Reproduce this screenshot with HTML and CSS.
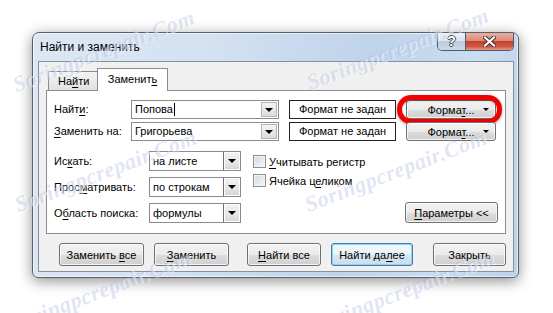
FILE: index.html
```html
<!DOCTYPE html>
<html lang="ru">
<head>
    <meta charset="UTF-8">
    <title>Найти и заменить</title>
    <link rel="stylesheet" href="styles.css">
</head>
<body>
    <div class="dialog">
        <div class="titlebar">
            <span class="title">Найти и заменить</span>
            <div class="caption">
                <span class="cap-help">?</span>
                <span class="cap-close">
                    <svg width="13" height="11" viewBox="0 0 13 11">
                        <path d="M2 1.5 L11 9.5 M11 1.5 L2 9.5" stroke="#4a3030" stroke-width="4.2" stroke-linecap="square"/>
                        <path d="M2 1.5 L11 9.5 M11 1.5 L2 9.5" stroke="#fff" stroke-width="2.2" stroke-linecap="square"/>
                    </svg>
                </span>
            </div>
        </div>
        <div class="client">
            <div class="tabs">
                <span class="tab">На<u>й</u>ти</span>
                <span class="tab active">Заменит<u>ь</u></span>
            </div>
            <div class="panel">
                <div class="find-grid">
                    <span class="lbl">Найт<u>и</u>:</span>
                    <div class="combo">
                        <span class="value">Попова<span class="caret"></span></span>
                        <span class="drop"></span>
                    </div>
                    <div class="format-box">Формат не задан</div>
                    <div class="format-cell marked">
                        <button class="btn format">Форма<u>т</u>...<span class="tri"></span></button>
                    </div>

                    <span class="lbl"><u>З</u>аменить на:</span>
                    <div class="combo">
                        <span class="value">Григорьева</span>
                        <span class="drop"></span>
                    </div>
                    <div class="format-box">Формат не задан</div>
                    <div class="format-cell">
                        <button class="btn format">Форма<u>т</u>...<span class="tri"></span></button>
                    </div>
                </div>

                <div class="options">
                    <div class="scope">
                        <span class="lbl">Ис<u>к</u>ать:</span>
                        <div class="combo select">
                            <span class="value">на листе</span>
                            <span class="drop"></span>
                        </div>
                        <span class="lbl">Прос<u>м</u>атривать:</span>
                        <div class="combo select">
                            <span class="value">по строкам</span>
                            <span class="drop"></span>
                        </div>
                        <span class="lbl">О<u>б</u>ласть поиска:</span>
                        <div class="combo select">
                            <span class="value">формулы</span>
                            <span class="drop"></span>
                        </div>
                    </div>
                    <div class="checks">
                        <label class="check"><span class="box"></span><span><u>У</u>читывать регистр</span></label>
                        <label class="check"><span class="box"></span><span>Ячейка ц<u>е</u>ликом</span></label>
                    </div>
                    <button class="btn params"><u>П</u>араметры &lt;&lt;</button>
                </div>
            </div>
            <div class="actions">
                <button class="btn replace-all">Заменить <u>в</u>се</button>
                <button class="btn replace"><u>З</u>аменить</button>
                <button class="btn find-all"><u>Н</u>айти все</button>
                <button class="btn find-next default">Найти да<u>л</u>ее</button>
                <button class="btn close">Закрыть</button>
            </div>
        </div>
    </div>

    <div class="watermarks">
        <span class="wm wm-1">Soringpcrepair.Com</span>
        <span class="wm wm-2">Soringpcrepair.Com</span>
        <span class="wm wm-3">Soringpcrepair.Com</span>
        <span class="wm wm-4">Soringpcrepair.Com</span>
        <span class="wm wm-5">Soringpcrepair.Com</span>
        <span class="wm wm-6">Soringpcrepair.Com</span>
    </div>
</body>
</html>
```

FILE: styles.css
```css
* {
    box-sizing: border-box;
}
body {
    margin: 0;
    width: 553px;
    height: 313px;
    position: relative;
    overflow: hidden;
    background: #fff;
    font-family: "Liberation Sans", Arial, sans-serif;
    font-size: 11px;
    color: #000;
}
u {
    text-decoration-thickness: 1px;
    text-underline-offset: 2px;
}

/* window frame */
.dialog {
    margin: 32px 0 0 32px;
    width: 487px;
    height: 246px;
    display: flex;
    flex-direction: column;
    padding: 0 4px 5px 5px;
    border: 1px solid #55606c;
    border-radius: 7px 7px 6px 6px;
    background: linear-gradient(100deg, #dde7f3 0%, #d3e1f1 35%, #bfd3eb 65%, #cadcf0 85%, #bcd1ea 100%);
    box-shadow: 0 3px 14px rgba(0, 0, 0, 0.45), inset 0 0 0 1px rgba(255, 255, 255, 0.6);
}
.titlebar {
    height: 28px;
    flex-shrink: 0;
    display: flex;
    justify-content: space-between;
    align-items: flex-start;
    padding-left: 2px;
}
.title {
    font-size: 12px;
    line-height: 28px;
}
.caption {
    display: flex;
    height: 18px;
    border: 1px solid #4f5b69;
    border-top: none;
    border-radius: 0 0 5px 5px;
    overflow: hidden;
}
.cap-help {
    width: 28px;
    border-right: 1px solid #4f5b69;
    background: linear-gradient(#eaf1f9 0%, #d7e3f0 45%, #bccbdd 50%, #cbd9ea 100%);
    text-align: center;
    font-weight: bold;
    font-size: 14px;
    line-height: 17px;
    color: #fff;
    text-shadow: 1px 0 0 #3c4650, -1px 0 0 #3c4650, 0 1px 0 #3c4650, 0 -1px 0 #3c4650;
}
.cap-close {
    width: 47px;
    display: flex;
    align-items: center;
    justify-content: center;
    background: linear-gradient(#eab0a4 0%, #dc8a78 45%, #c4412c 50%, #d05a45 80%, #e59b88 100%);
}

.client {
    flex: 1;
    display: flex;
    flex-direction: column;
    background: #f0f0f0;
    border: 1px solid #84919f;
}

/* tabs */
.tabs {
    height: 28px;
    display: flex;
    align-items: flex-end;
    padding-left: 9px;
}
.tab {
    height: 19px;
    width: 50px;
    padding-left: 9px;
    line-height: 18px;
    border: 1px solid #898c95;
    border-bottom: none;
    background: linear-gradient(#f3f3f3, #e2e2e2);
}
.tab.active {
    position: relative;
    z-index: 1;
    height: 23px;
    width: 71px;
    margin-left: -1px;
    margin-bottom: -1px;
    padding-left: 0;
    text-align: center;
    line-height: 20px;
    background: #fff;
}

.panel {
    height: 144px;
    margin: 0 7px;
    padding: 9px 7px 0 7px;
    border: 1px solid #898c95;
    background: #fff;
}

/* find / replace rows */
.find-grid {
    display: grid;
    grid-template-columns: 67px 148px 107px 90px;
    grid-auto-rows: 19px;
    column-gap: 10px;
    row-gap: 3px;
}
.lbl {
    line-height: 19px;
    white-space: nowrap;
}
.combo {
    display: flex;
    border: 1px solid #8b8b8b;
    background: #fff;
}
.combo .value {
    flex: 1;
    padding-left: 3px;
    line-height: 17px;
    white-space: nowrap;
}
.caret {
    display: inline-block;
    width: 1px;
    height: 13px;
    margin-left: 1px;
    vertical-align: -3px;
    background: #000;
}
.drop {
    width: 16px;
    margin: 1px;
    display: flex;
    align-items: center;
    justify-content: center;
    border: 1px solid #b5b5b5;
    background: linear-gradient(#f4f4f4, #dcdcdc);
}
.drop::before {
    content: "";
    border-style: solid;
    border-width: 4px 4px 0 4px;
    border-color: #000 transparent transparent transparent;
}
.combo.select {
    height: 20px;
}
.combo.select .value {
    line-height: 18px;
}
.combo.select .drop {
    margin: 0;
    width: 17px;
    border: 1px solid #707070;
    border-width: 0 0 0 1px;
    background: linear-gradient(#f2f2f2 0%, #e8e8e8 50%, #d5d5d5 100%);
    box-shadow: inset 0 0 0 1px #fff;
}

.format-box {
    border: 1px solid #222;
    text-align: center;
    line-height: 17px;
    white-space: nowrap;
}
.format-cell {
    position: relative;
}
.format-cell.marked::after {
    content: "";
    position: absolute;
    top: -5px;
    right: -6px;
    bottom: -5px;
    left: -9px;
    border: 5px solid #f00000;
    border-radius: 14px;
    box-shadow: 0 1px 3px rgba(0, 0, 0, 0.4), inset 0 1px 2px rgba(0, 0, 0, 0.3);
}

/* buttons */
.btn {
    font: inherit;
    color: #000;
    padding: 0;
    border: 1px solid #707070;
    border-radius: 3px;
    background: linear-gradient(#f2f2f2 0%, #ebebeb 50%, #dddddd 51%, #cfcfcf 100%);
    box-shadow: inset 0 0 0 1px rgba(255, 255, 255, 0.75);
    white-space: nowrap;
}
.btn.format {
    width: 90px;
    height: 19px;
    position: relative;
}
.btn.format .tri {
    position: absolute;
    right: 6px;
    top: 7px;
    border-style: solid;
    border-width: 3px 3px 0 3px;
    border-color: #000 transparent transparent transparent;
}

/* options */
.options {
    display: flex;
    margin-top: 10px;
}
.scope {
    display: grid;
    grid-template-columns: 95px 92px;
    grid-auto-rows: 20px;
    row-gap: 6px;
}
.scope .lbl {
    line-height: 20px;
}
.checks {
    margin-left: 12px;
    padding-top: 4px;
    display: flex;
    flex-direction: column;
    gap: 6px;
}
.check {
    display: flex;
    align-items: center;
    height: 13px;
    gap: 3px;
    white-space: nowrap;
}
.box {
    width: 13px;
    height: 13px;
    border: 1px solid #8e8f8f;
    background: linear-gradient(135deg, #d4d8de, #f6f6f6);
    box-shadow: inset 0 0 0 1px #f4f4f4;
}
.btn.params {
    margin-left: auto;
    align-self: flex-end;
    width: 93px;
    height: 21px;
}

/* bottom buttons */
.actions {
    display: flex;
    margin-top: 9px;
    padding-left: 20px;
}
.actions .btn {
    height: 23px;
}
.replace-all { width: 85px; }
.replace { width: 75px; margin-left: 10px; }
.find-all { width: 74px; margin-left: 18px; }
.find-next { width: 82px; margin-left: 10px; }
.close { width: 73px; margin-left: 20px; }
.btn.default {
    border-color: #3c7fb1;
    box-shadow: inset 0 0 0 1px #8fd0f2;
    background: linear-gradient(#f1f8fc 0%, #e8f2f9 50%, #d8e6f0 51%, #cddde9 100%);
}

/* watermark overlay */
.watermarks {
    position: absolute;
    top: 0;
    left: 0;
    right: 0;
    bottom: 0;
    overflow: hidden;
    pointer-events: none;
}
.wm {
    position: absolute;
    font-family: "Liberation Serif", serif;
    font-style: italic;
    font-weight: bold;
    font-size: 22px;
    line-height: 24px;
    letter-spacing: 0.5px;
    white-space: nowrap;
    color: rgba(150, 166, 218, 0.3);
    text-shadow: 1px 1px 0 rgba(255, 255, 255, 0.5);
    transform: rotate(-21deg);
    transform-origin: 0 100%;
}
.wm-1 { left: 18px; top: 73px; }
.wm-2 { left: 312px; top: 71px; }
.wm-3 { left: 20px; top: 193px; }
.wm-4 { left: 310px; top: 193px; }
.wm-5 { left: 15px; top: 313px; }
.wm-6 { left: 318px; top: 313px; }
```
